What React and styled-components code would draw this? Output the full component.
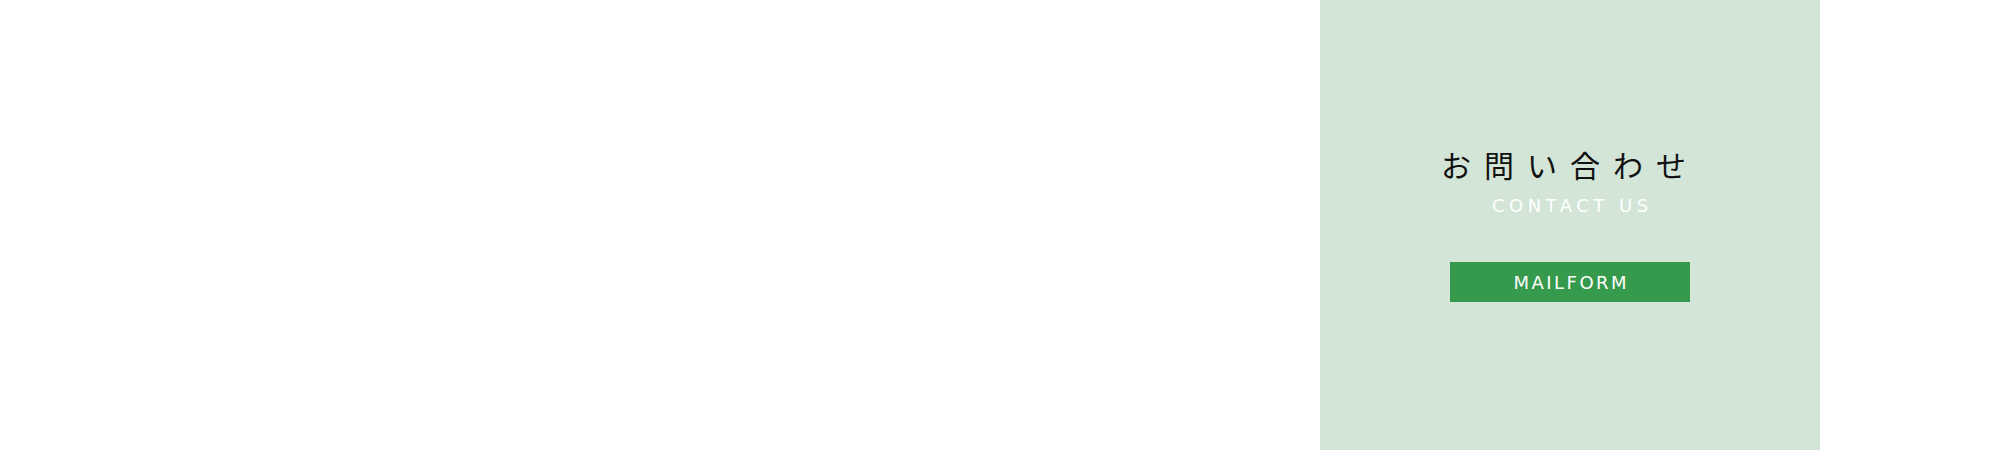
import React from "react";
import styled, { createGlobalStyle } from "styled-components";

const GlobalStyle = createGlobalStyle`
    body {
        margin: 0;
        background: #fff;
        font-family: "DejaVu Sans", "Noto Sans", sans-serif;
    }
`;

const Page = styled.div`
    display: grid;
    grid-template-columns: 1320px 500px 1fr;
    width: 2000px;
    height: 450px;
`;

const Contact = styled.section`
    grid-column: 2;
    background: #d3e5d7;
    display: flex;
    flex-direction: column;
    align-items: center;
    padding-top: 144px;
    box-sizing: border-box;
`;

const Title = styled.h2`
    margin: 0;
    font-family: "Noto Sans CJK JP", sans-serif;
    font-weight: 400;
    font-size: 30px;
    line-height: 40px;
    letter-spacing: 13px;
    color: #111;
`;

const Sub = styled.p`
    margin: 10px 0 0;
    font-family: "DejaVu Sans", sans-serif;
    font-weight: 400;
    font-size: 18px;
    line-height: 24px;
    letter-spacing: 4.5px;
    padding-left: 4.5px;
    color: #fff;
`;

const MailButton = styled.a`
    margin-top: 44px;
    width: 240px;
    height: 40px;
    display: flex;
    align-items: center;
    justify-content: center;
    padding-left: 2.5px;
    box-sizing: border-box;
    background: #359a4c;
    color: #fff;
    font-family: "DejaVu Sans", sans-serif;
    font-weight: 400;
    font-size: 18px;
    letter-spacing: 2.5px;
    text-decoration: none;
`;

export default function App() {
    return (
        <>
            <GlobalStyle />
            <Page>
                <Contact>
                    <Title>お問い合わせ</Title>
                    <Sub>CONTACT US</Sub>
                    <MailButton href="#">MAILFORM</MailButton>
                </Contact>
            </Page>
        </>
    );
}
